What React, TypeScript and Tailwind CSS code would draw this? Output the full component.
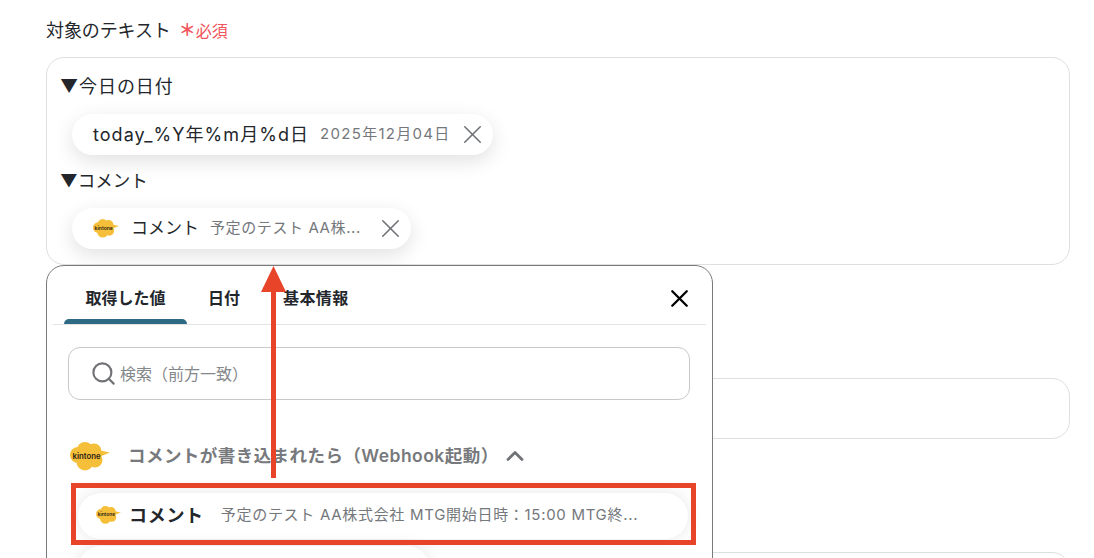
import React from 'react';
import { ChevronUp, Search, X } from 'lucide-react';

const font = 'font-["Inter","Noto_Sans_CJK_JP",sans-serif]';

const KintoneLogo = ({ className }: { className: string }) => (
  <svg viewBox="0 0 40 29" className={className}>
    <g fill="#f6bf3a">
      <circle cx="8" cy="13" r="8" />
      <circle cx="15" cy="8" r="8" />
      <circle cx="24" cy="9" r="7.5" />
      <circle cx="25" cy="18" r="7.5" />
      <circle cx="15" cy="20" r="8.5" />
      <path d="M28 8 L40 10.5 L29 15 Z" />
    </g>
    <text x="16.5" y="16.5" textAnchor="middle" fontSize="7.8" fontWeight="600" fill="#2a2212" fontFamily="Inter, sans-serif">
      kintone
    </text>
  </svg>
);

const Chip = ({
  name,
  value,
  logo,
  nameClass,
  valueClass,
  iconClass,
}: {
  name: string;
  value: string;
  logo?: boolean;
  nameClass: string;
  valueClass: string;
  iconClass: string;
}) => (
  <div className="ml-[11px] flex h-[41px] w-fit items-center rounded-full bg-white pl-[21px] pr-[5px] shadow-[0_6px_20px_rgba(0,0,0,0.12)]">
    {logo && <KintoneLogo className="mr-[12px] h-[19px] w-[26px]" />}
    <span className={`text-[#23272c] ${nameClass}`}>{name}</span>
    <span className={`ml-[11px] text-[#74777b] ${valueClass}`}>{value}</span>
    <X className={`h-[31px] w-[31px] text-[#6f7276] ${iconClass}`} strokeWidth={1.2} />
  </div>
);

export default function App() {
  return (
    <div className={`relative h-[558px] w-[1094px] overflow-hidden bg-white pl-[46px] pr-[24px] ${font}`}>
      <div className="flex h-[57px] items-center pt-[4px]">
        <span className="text-[18px] tracking-[-0.1px] text-[#23272c]">対象のテキスト</span>
        <span className="ml-[8px] text-[17px] font-bold text-[#f0545c]">＊</span>
        <span className="text-[16px] text-[#f0545c]">必須</span>
      </div>

      <div className="h-[208px] rounded-[18px] border border-[#dfdfdf] pl-[13px] pr-[14px] pt-[14px]">
        <div className="h-[29px] text-[18px] leading-[29px] tracking-[0.9px] text-[#23272c]">▼今日の日付</div>
        <div className="mt-[13px] pl-[1px]">
          <Chip
            name="today_%Y年%m月%d日"
            value="2025年12月04日"
            nameClass="text-[18px] tracking-[1.05px]"
            valueClass="text-[15px] tracking-[1.3px]"
            iconClass="ml-[6px]"
          />
        </div>
        <div className="mt-[11px] h-[29px] text-[17.5px] leading-[29px] text-[#23272c]">▼コメント</div>
        <div className="mt-[13px] pl-[1px]">
          <Chip
            logo
            name="コメント"
            value="予定のテスト AA株..."
            nameClass="text-[17px]"
            valueClass="text-[15px] tracking-[0.6px]"
            iconClass="ml-[14px]"
          />
        </div>
      </div>

      <div className="mt-[113px] h-[61px] rounded-[18px] border border-[#dfdfdf]" />
      <div className="mt-[113px] h-[61px] rounded-[18px] border border-[#dfdfdf]" />

      {/* variable picker popup */}
      <div className="absolute left-[46px] top-[265px] h-[320px] w-[667px] rounded-[18px] border border-[#77797c] bg-white">
        <div className="mx-[6px] flex h-[59px] items-end border-b border-[#e3e3e3] pl-[11px]">
          <div className="relative flex h-[58px] w-[123px] items-center justify-center pt-[6px] text-[16px] font-semibold text-[#23272c]">
            取得した値
            <div className="absolute bottom-0 left-0 h-[5px] w-full rounded-t-[5px] bg-[#2f6a85]" />
          </div>
          <div className="flex h-[58px] w-[74px] items-center justify-center pt-[6px] text-[16px] font-semibold text-[#23272c]">
            日付
          </div>
          <div className="flex h-[58px] items-center pl-[22px] pt-[6px] text-[16px] tracking-[0.4px] font-semibold text-[#23272c]">
            基本情報
          </div>
          <X className="mb-[11px] ml-auto mr-[12px] h-[29px] w-[29px] text-black" strokeWidth={1.9} />
        </div>

        <div className="ml-[21px] mr-[22px] mt-[22px] flex h-[53px] items-center rounded-[12px] border border-[#c9c9c9] pl-[21px]">
          <Search className="h-[27px] w-[27px] text-[#707276]" strokeWidth={1.9} />
          <span className="ml-[3px] text-[16px] text-[#85888b]">検索（前方一致）</span>
        </div>

        <div className="mt-[35px] flex h-[42px] items-center pl-[23px]">
          <KintoneLogo className="h-[29px] w-[40px]" />
          <span className="ml-[18px] text-[17.5px] font-semibold tracking-[0.45px] text-[#77797c]">
            コメントが書き込まれたら（Webhook起動）
          </span>
          <ChevronUp className="ml-[2px] h-[28px] w-[28px] text-[#6f7276]" strokeWidth={2.4} />
        </div>

        <div className="ml-[31px] mt-[16px] flex h-[46px] w-[610px] items-center rounded-full bg-white pb-[2px] pl-[18px] shadow-[0_0_16px_rgba(0,0,0,0.1)]">
          <KintoneLogo className="h-[18px] w-[25px]" />
          <span className="ml-[8px] text-[18px] font-semibold tracking-[0.7px] text-[#23272c]">コメント</span>
          <span className="ml-[17px] text-[15px] tracking-[0.7px] text-[#74777b]">
            予定のテスト AA株式会社 MTG開始日時：15:00 MTG終...
          </span>
        </div>
        <div className="ml-[31px] mt-[7px] h-[46px] w-[352px] rounded-full bg-white shadow-[0_0_16px_rgba(0,0,0,0.1)]" />
      </div>

      {/* annotation overlay */}
      <div className="absolute left-[71px] top-[483px] h-[62px] w-[625px] border-[5px] border-[#e8442a]" />
      <div className="absolute left-[271px] top-[290px] h-[188px] w-[5px] bg-[#e8442a]" />
      <svg className="absolute left-[261px] top-[266px] h-[27px] w-[26px]" viewBox="0 0 26 27">
        <polygon points="12.5,0 25,26 0,26" fill="#e8442a" />
      </svg>
    </div>
  );
}
